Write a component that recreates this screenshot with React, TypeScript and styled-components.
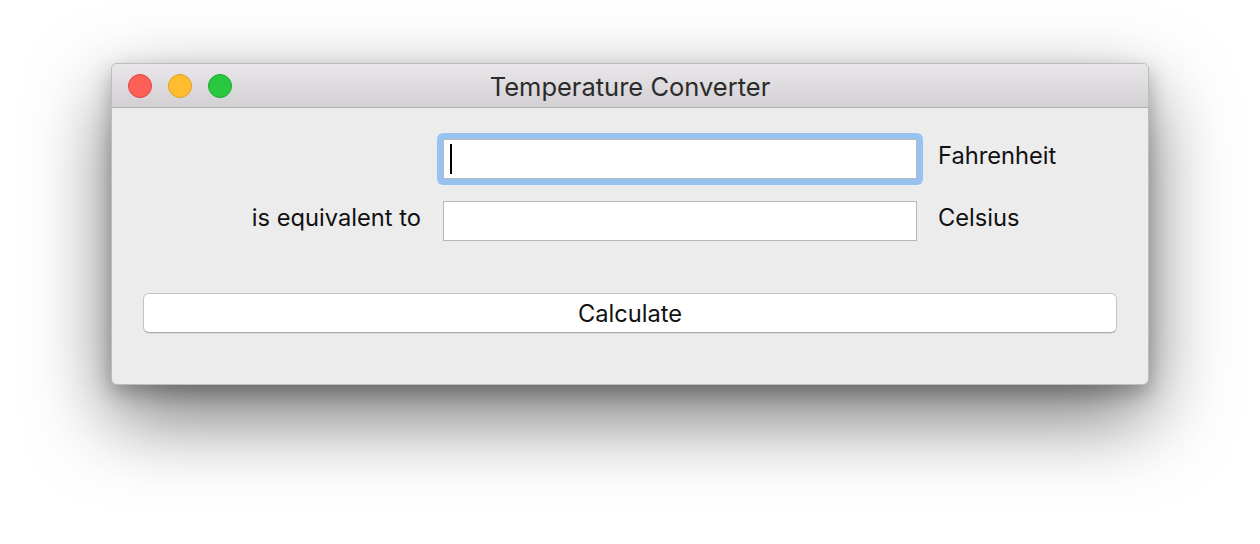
import React from "react";
import styled, { createGlobalStyle } from "styled-components";

const Global = createGlobalStyle`
  html, body { margin: 0; padding: 0; background: #ffffff; }
  body { font-family: Inter, "Noto Sans", sans-serif; -webkit-font-smoothing: antialiased; }
`;

const Stage = styled.div`
  width: 1260px;
  height: 544px;
  padding: 63px 0 0 111px;
  box-sizing: border-box;
  display: flex;
  align-items: flex-start;
  overflow: hidden;
`;

const Window = styled.div`
  width: 1038px;
  height: 322px;
  box-sizing: border-box;
  border-radius: 6px;
  background: #ececec;
  border: 1px solid #bdbdbd;
  box-shadow: 0 32px 80px rgba(0, 0, 0, 0.55), 0 8px 20px rgba(0, 0, 0, 0.25);
  display: flex;
  flex-direction: column;
  overflow: hidden;
`;

const TitleBar = styled.div`
  height: 44px;
  flex: none;
  box-sizing: border-box;
  background: linear-gradient(#e9e7e9, #d2d0d2);
  border-bottom: 1px solid #b2b0b2;
  display: flex;
  align-items: center;
  position: relative;
  padding-left: 16px;
`;

const Lights = styled.div`
  display: flex;
  gap: 16px;
`;

const Light = styled.span<{ $c: string; $b: string }>`
  width: 24px;
  height: 24px;
  border-radius: 50%;
  box-sizing: border-box;
  background: ${(p) => p.$c};
  border: 1px solid ${(p) => p.$b};
`;

const Title = styled.div`
  position: absolute;
  left: 0;
  right: 0;
  top: 0;
  bottom: 0;
  display: flex;
  align-items: center;
  justify-content: center;
  padding-top: 1px;
  font-size: 25.5px;
  color: #2b2b2b;
  pointer-events: none;
`;

const Body = styled.div`
  flex: 1;
  padding: 31px 31px 0 31px;
  display: flex;
  flex-direction: column;
`;

const Form = styled.div`
  display: grid;
  grid-template-columns: 278px 474px 1fr;
  column-gap: 21.5px;
  row-gap: 22px;
  align-items: center;
`;

const Label = styled.div<{ $right?: boolean }>`
  font-size: 23.7px;
  line-height: 28px;
  margin-top: -6px;
  color: #111;
  text-align: ${(p) => (p.$right ? "right" : "left")};
  ${(p) => (p.$right ? "padding-right: 0px;" : "")}
`;

const FieldWrap = styled.div`
  position: relative;
  height: 40px;
`;

const FocusRing = styled.div`
  position: absolute;
  inset: -6px;
  border-radius: 6px;
  background: #96c3f1;
`;

const TextField = styled.div`
  position: relative;
  height: 40px;
  box-sizing: border-box;
  background: #fff;
  border: 1px solid #b8b8b8;
  display: flex;
  align-items: center;
  padding-left: 6px;
`;

const Caret = styled.span`
  width: 2px;
  height: 30px;
  background: #000;
`;

const Button = styled.div`
  margin-top: 52px;
  height: 40px;
  box-sizing: border-box;
  background: #fff;
  border: 1px solid #c4c4c4;
  border-bottom-color: #aaaaaa;
  border-radius: 6px;
  box-shadow: 0 1px 1px rgba(0, 0, 0, 0.08);
  display: flex;
  align-items: center;
  justify-content: center;
  font-size: 23.7px;
  color: #111;
`;

export default function App() {
  return (
    <>
      <Global />
      <Stage>
        <Window>
          <TitleBar>
            <Lights>
              <Light $c="#fe5f57" $b="#e0443e" />
              <Light $c="#febc2e" $b="#dea123" />
              <Light $c="#28c840" $b="#1aab29" />
            </Lights>
            <Title>Temperature Converter</Title>
          </TitleBar>
          <Body>
            <Form>
              <div />
              <FieldWrap>
                <FocusRing />
                <TextField>
                  <Caret />
                </TextField>
              </FieldWrap>
              <Label>Fahrenheit</Label>
              <Label $right>is equivalent to</Label>
              <FieldWrap>
                <TextField />
              </FieldWrap>
              <Label>Celsius</Label>
            </Form>
            <Button>Calculate</Button>
          </Body>
        </Window>
      </Stage>
    </>
  );
}
